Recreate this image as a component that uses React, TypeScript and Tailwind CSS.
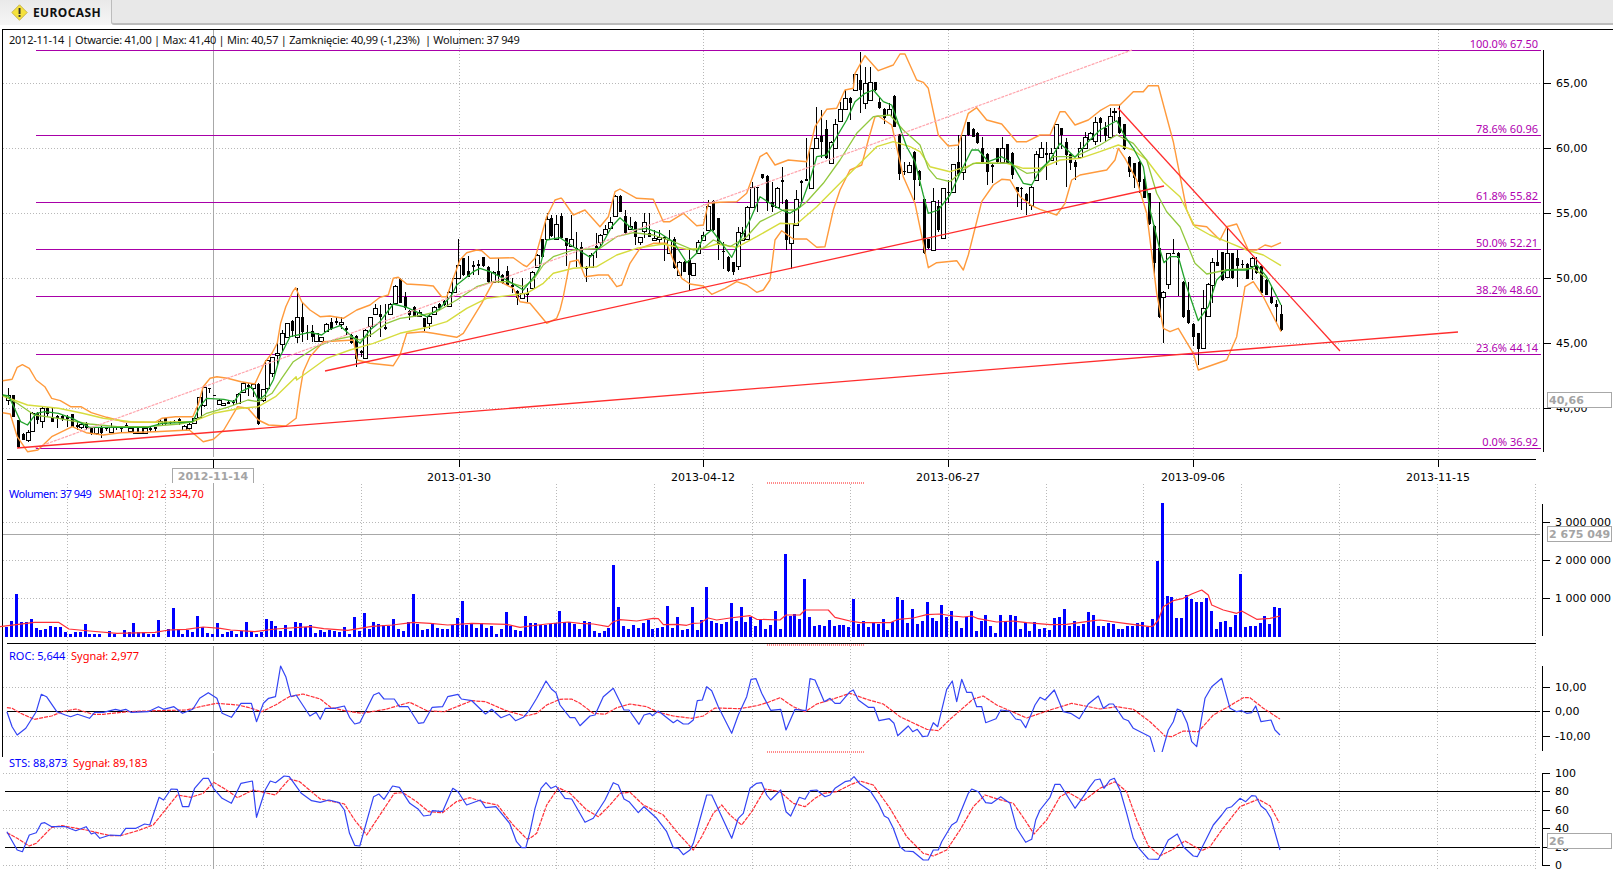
import type { ReactNode } from "react";

// Point data was sampled off 3x crops, hence the origin + divide in seg().
// The widest crops came back at 2.904x horizontally.
const WIDE = 2.904;

function seg(ox: number, oy: number, flat: number[], sx = 3) {
  const out: string[] = [];
  for (let i = 0; i < flat.length; i += 2) {
    out.push(`${(ox + flat[i] / sx).toFixed(1)},${(oy + flat[i + 1] / 3).toFixed(1)}`);
  }
  return out;
}

const upperBand = [
  ...seg(0, 290, [8,272,35,268,50,232,65,224,85,235,105,270,130,290,150,325,175,332,205,350,235,350,265,368,310,382,360,395,400,397,450,397,470,385,510,380,560,380,575,345,590,290,610,265,630,260,660,265,700,275,740,282,770,215,790,190,805,160,815,100,830,50,850,5], WIDE),
  ...seg(260, 180, [107,323,125,365,150,390,180,410,210,408,250,415,290,390,330,375,360,352,385,345,400,295,415,292,440,312,490,315,520,318,545,350,560,350,580,295,600,240,620,218,650,210,665,212,690,235,760,233,790,255,800,260,825,235,860,110,885,60,900,55]),
  ...seg(540, 40, [65,475,100,525,135,510,180,560,205,530,225,455,240,447,290,475,340,478,370,545,390,545,430,520,470,557,490,555,505,490,540,487,590,485,620,460,660,350,680,338,705,375,745,360,800,365,825,260,860,208,890,205,915,150,940,145,945,100,975,47,1015,92,1060,75,1080,42,1095,42,1130,120,1150,127,1165,145,1195,285,1225,318,1255,315,1285,220,1310,203,1340,240,1385,252,1430,305,1460,305,1500,285]),
  ...seg(1000, 80, [150,165,180,95,195,95,225,135,265,120,300,92,330,75,360,75,400,35,430,35,445,17,475,17,520,185,560,390,580,435,620,440,660,480,680,440,710,432,745,510,770,510,795,495,815,500,843,488]),
];

const lowerBand = [
  ...seg(0, 290, [8,368,30,372,50,440,80,485,110,480,150,440,210,410,250,428,300,435,350,428,450,425,550,420,590,455,620,448,650,420,690,350,720,355,750,390,780,405,830,408,860,385,870,310], WIDE),
  ...seg(260, 180, [130,575,150,530,190,485,280,480,292,540,330,550,400,557,420,525,440,460,490,455,520,460,590,472,610,460,665,370,700,305,720,305,760,325,780,365,810,370,860,430,890,415,900,390]),
  ...seg(540, 40, [70,770,90,665,115,660,135,710,175,705,205,705,230,740,245,735,270,670,300,625,340,610,380,610,400,660,425,715,450,732,490,738,515,763,555,745,590,725,620,735,650,757,670,750,690,720,705,600,725,572,760,597,800,597,830,622,855,620,880,510,900,450,930,390,965,375,985,300,1005,230,1015,228,1055,255,1090,410,1125,490,1165,683,1190,668,1250,662,1270,690,1285,645,1325,485,1360,435,1385,418,1410,420,1440,470,1475,497,1500,508]),
  ...seg(1000, 80, [170,405,195,370,215,300,240,285,320,270,345,240,355,205,375,235,410,300,440,400,470,640,490,745,510,755,535,745,580,820,595,870,680,840,710,770,735,620,760,605,790,650,843,755]),
];

const fastMa = [
  ...seg(0, 290, [8,315,25,318,40,350,60,395,80,405,105,370,130,365,170,370,210,385,260,412,340,412,430,412,470,400,520,398,560,395,580,350,600,325,650,328,680,335,700,305,730,290,750,330,770,315], WIDE),
  ...seg(260, 180, [40,600,60,530,90,470,150,457,185,465,205,450,240,437,265,460,300,490,330,450,360,425,400,372,440,382,500,410,540,385,575,345,590,315,640,275,660,265,690,275,740,300,790,330,830,280]),
  ...seg(540, 40, [0,680,20,600,60,593,100,620,150,652,185,615,215,560,240,533,280,570,320,565,360,580,400,605,440,668,470,640,490,590,515,570,545,610,575,652,600,600,630,540,660,470,690,490,725,510,750,520,780,500,810,420,830,350,860,345,890,290,920,240,945,185,975,160,1000,150,1030,185,1055,195,1075,250,1100,320,1125,365,1150,465,1165,520,1195,510,1230,465,1260,400,1295,330,1315,330,1345,365,1385,350,1415,370,1450,430,1475,435,1500,390]),
  ...seg(1000, 80, [150,240,180,190,225,232,260,190,300,150,350,122,375,170,400,205,430,260,450,390,480,510,492,548,510,530,535,530,560,620,595,722,625,680,650,600,680,570,740,570,770,555,800,590,843,675]),
];

const midMa = [
  ...seg(0, 290, [8,315,50,340,100,375,170,385,260,402,340,410,430,410,520,402,560,395,600,370,660,352,720,330,750,335,790,310], WIDE),
  ...seg(260, 180, [65,595,100,545,170,500,220,480,270,470,300,480,340,460,380,430,420,415,490,405,530,395,590,360,650,320,700,305,740,305,790,320,820,300,850,255]),
  ...seg(540, 40, [40,650,100,630,180,625,230,590,280,578,340,585,400,605,460,630,490,625,520,600,570,620,620,590,660,545,730,510,770,510,800,485,850,430,900,360,950,280,1000,230,1050,225,1090,270,1140,315,1165,385,1190,415,1230,425,1270,390,1300,370,1350,370,1410,370,1460,400,1500,395]),
  ...seg(1000, 80, [160,230,225,230,300,195,350,165,400,190,440,240,470,340,500,395,540,440,585,550,620,582,680,570,760,565,800,595]),
];

const slowMa = [
  ...seg(0, 290, [8,318,80,345,170,355,240,370,300,385,380,395,450,397,520,395,560,395,620,370,700,355,750,350,800,320,860,260], WIDE),
  ...seg(260, 180, [110,600,200,535,270,510,340,490,420,460,510,440,560,425,620,385,680,355,760,345,800,340,850,310]),
  ...seg(540, 40, [40,700,100,685,170,680,230,645,290,625,370,612,440,628,490,625,530,612,590,622,650,590,720,550,770,552,830,500,900,430,960,370,1010,320,1060,305,1110,320,1140,335,1170,380,1230,395,1280,380,1310,368,1400,370,1450,385,1500,385]),
  ...seg(1000, 80, [180,240,240,235,300,215,355,195,400,210,440,240,490,305,540,350,585,440,630,465,680,485,740,510,790,525,843,557]),
];

type Row = [number, number, number, number, number];
type Candle = { hi: number; top: number; bot: number; lo: number; filled: boolean };

const toCandles = (oy: number, rows: Row[]): Candle[] =>
  rows.map(([hi, top, bot, lo, f]) => ({
    hi: oy + hi / 3,
    top: oy + top / 3,
    bot: oy + bot / 3,
    lo: oy + lo / 3,
    filled: f === 1,
  }));

// high, body top, body bottom, low, filled
const candles: Candle[] = [
  ...toCandles(290, [
    [295,315,330,345,0],[315,316,380,382,1],[390,390,470,475,1],[430,432,450,452,1],[420,425,450,455,0],[365,368,422,425,0],[365,368,390,400,1],[352,355,392,415,0],[350,355,372,380,1],[355,385,395,395,1],
    [375,378,385,415,1],[375,378,388,392,1],[375,382,386,410,1],[373,373,410,412,1],[395,405,412,418,1],[395,403,412,415,0],[395,403,415,420,1],[410,412,432,434,1],[410,412,430,435,0],[408,410,428,443,1],
    [412,414,418,425,1],[400,412,425,428,0],[410,412,415,418,1],[412,413,415,428,1],[398,405,412,414,1],[412,415,422,424,0],[410,412,428,430,0],[408,411,428,430,0],[413,415,430,432,0],[412,415,419,426,1],
    [410,412,418,422,1],[388,392,405,410,0],[384,385,402,404,1],[393,395,399,406,1],[390,392,396,400,1],[384,388,398,406,1],[405,408,420,422,0],[398,402,415,418,0],[382,385,400,403,0],[320,322,380,385,0],
    [290,292,345,350,0],[295,295,297,310,1],[315,315,318,318,1],[328,330,343,345,0],[338,340,346,348,0],[334,336,341,343,1],[330,335,340,345,1],[310,312,338,340,0],[276,278,305,308,0],[280,285,292,320,1],
    [278,283,295,320,0],[280,282,403,405,1],[296,298,330,336,0],
  ]),
  ...toCandles(180, [
    [540,540,625,630,0],[530,530,580,590,0],[490,518,525,560,0],[450,458,492,515,0],[428,430,470,472,0],[420,423,453,470,1],[323,412,472,488,0],[365,412,455,485,1],[435,455,460,480,1],[435,453,470,487,1],
    [458,460,482,484,0],[470,472,482,484,0],[430,432,452,455,0],[413,427,448,450,1],[410,423,430,435,1],[410,427,433,445,0],[437,445,450,465,1],[462,465,490,492,1],[466,468,538,563,1],[510,512,518,530,1],
    [448,450,535,537,0],[410,412,437,470,0],[372,385,403,405,0],[375,403,412,470,1],[372,442,447,450,1],[370,372,403,405,0],[315,317,368,370,0],[295,297,368,370,1],[335,350,385,390,1],[390,392,405,420,1],
    [378,380,410,412,1],[390,395,408,410,0],[413,415,440,452,1],[400,408,430,447,0],[378,380,403,405,0],[370,372,385,390,1],[360,362,375,378,1],[333,335,378,380,0],[293,295,335,338,0],[178,255,295,297,0],
    [233,235,285,287,1],[228,272,290,292,1],[243,256,260,285,1],[240,253,258,285,1],[230,232,258,260,1],[258,262,305,308,1],[273,275,305,308,0],[235,272,288,310,1],[283,285,310,312,1],[258,272,315,317,1],
    [295,315,322,340,1],[330,333,355,375,1],[295,340,355,358,0],[325,340,345,368,1],[273,275,325,328,0],[223,225,260,262,0],[176,178,232,234,1],
  ]),
  ...toCandles(40, [
    [520,538,597,600,0],[525,535,588,590,1],[525,553,598,600,0],[520,528,595,597,1],[593,595,618,678,1],[525,598,618,620,0],[575,623,628,680,1],[605,620,680,682,1],[678,680,688,725,1],[640,645,680,682,0],
    [580,618,628,655,1],[583,585,605,620,0],[555,568,582,584,0],[530,545,565,567,0],[466,468,527,529,0],[466,468,515,517,1],[510,528,580,582,1],[530,558,568,570,0],[543,545,590,615,1],[590,592,605,615,0],
    [520,547,572,595,0],[520,580,590,592,1],[570,595,600,602,0],[570,590,597,610,0],[588,590,598,662,1],[570,600,640,642,0],[590,598,685,687,1],[663,665,705,707,0],[663,665,695,697,1],[625,660,705,750,1],
    [668,670,706,708,0],[600,605,640,642,0],[575,585,600,602,0],[480,497,570,572,0],[480,482,570,572,1],[533,535,615,660,1],[605,633,637,685,1],[648,650,693,695,1],[665,667,695,705,1],[560,577,678,690,0],
    [560,578,600,602,0],[498,500,598,600,0],[425,440,500,502,0],[440,441,444,515,1],[401,403,415,417,1],[406,408,490,515,1],[425,485,500,515,1],[441,443,500,502,0],[380,420,425,490,1],[478,480,600,630,1],
    [548,550,608,685,0],[450,478,555,557,0],[421,423,430,490,1],[295,418,422,422,1],[323,325,443,445,0],[200,295,325,327,0],[210,288,305,355,1],[240,268,355,357,1],[303,305,368,370,0],[238,253,325,327,0],
    [185,208,242,244,0],[150,175,208,210,0],[170,175,188,240,1],[101,103,150,152,0],[35,120,150,218,1],[80,130,188,205,0],[80,125,180,182,0],[125,127,150,152,1],[170,187,203,205,1],[205,208,235,252,1],
    [190,208,225,227,0],[166,168,260,262,1],[281,283,403,420,1],[365,393,397,405,1],[365,375,395,397,0],[333,335,420,480,1],[391,393,420,440,1],[476,478,638,640,1],[596,598,625,627,1],[445,482,630,632,0],
    [480,498,570,575,1],[443,445,595,597,0],[420,456,460,490,1],[371,373,455,457,0],[285,365,405,407,1],[285,285,395,420,0],[245,247,285,287,1],[265,267,290,292,1],[276,278,310,312,1],[290,325,365,367,1],
    [340,342,395,435,1],[370,376,380,430,1],[323,325,365,367,1],[290,325,365,367,0],[311,313,370,372,1],[336,338,405,418,1],[440,442,455,500,1],[440,443,447,510,1],[460,462,482,525,1],[438,440,495,510,0],
    [333,343,420,422,0],
  ]),
  ...toCandles(80, [
    [185,205,230,232,0],[185,220,224,300,1],[205,220,240,242,0],[133,133,205,255,0],[143,145,165,205,1],[175,187,225,322,1],[220,222,248,270,1],[240,245,262,300,1],[185,205,230,232,0],[155,172,205,207,0],
    [155,158,178,180,0],[110,127,182,195,0],[110,115,130,185,1],[125,145,168,185,1],[85,107,170,172,0],[85,92,97,125,0],[75,112,160,162,1],[131,133,207,209,1],[228,230,275,290,1],[248,250,295,322,1],
    [243,245,305,340,1],[285,297,353,355,1],[338,340,433,435,1],[435,437,550,590,1],[365,505,712,714,1],[633,635,652,788,0],[518,520,612,625,0],[478,518,522,522,1],[516,518,535,648,1],[603,605,712,714,1],
    [605,690,728,730,1],[730,732,770,800,1],[758,760,808,855,1],[630,683,805,807,0],[610,612,708,710,0],[535,547,615,670,0],[510,547,557,559,1],[515,517,600,602,1],[445,520,590,592,0],[518,520,595,597,1],
    [510,535,557,620,1],[540,551,555,565,1],[550,552,597,599,1],[530,535,557,600,0],[530,555,580,582,1],[556,558,640,645,1],[598,600,645,647,1],[620,650,668,670,1],[660,672,680,725,1],[675,703,750,752,1],
  ]),
];

const volumes = [
  10,16,43,15,15,18,9,7,8,11,10,10,5,3,5,5,13,3,3,3,0,6,3,0,7,5,14,5,5,3,3,17,0,8,29,8,3,7,5,21,10,4,3,14,
  3,5,6,3,6,15,6,3,5,18,16,11,6,12,6,15,14,10,12,4,7,5,7,6,5,10,3,20,6,24,8,15,13,12,11,18,8,6,15,43,13,7,8,14,9,8,8,12,19,36,12,13,9,14,9,11,3,8,25,11,7,6,21,
  14,14,12,12,13,14,26,15,15,13,8,16,15,6,4,6,9,72,30,11,8,12,9,14,17,8,9,10,31,9,20,7,8,30,7,17,50,16,14,13,15,34,16,30,15,20,11,18,8,12,26,8,83,21,23,18,58,20,11,12,11,17,11,12,12,10,
  38,13,16,10,15,13,18,7,15,40,37,14,28,13,16,35,19,16,32,20,26,16,9,20,26,6,16,22,11,4,22,16,22,21,8,14,6,15,8,9,7,19,20,28,11,16,11,13,25,22,11,
  11,14,13,8,8,11,11,14,15,10,18,76,134,41,40,19,19,42,38,35,35,39,26,8,15,16,10,22,63,10,11,11,14,21,13,30,29,
];

const volumeSma = [
  ...seg(0, 580, [0,140,100,127,170,127,200,147,260,153,340,160,450,157,490,150,540,148,590,141,640,145,670,150,740,155,800,147,900,140,940,146,1010,151,1080,139,1140,135,1200,127,1250,130,1300,135,1370,130,1470,133,1510,142], WIDE),
  ...seg(530, 480, [0,438,50,432,115,426,150,430,190,432,235,440,250,425,270,419,320,423,370,415,385,416,400,434,440,433,470,436,490,430,510,429,535,414,560,420,600,414,660,407,680,418,750,420,768,405,810,405,825,390,895,390,915,412,960,423]),
  ...seg(850, 480, [30,428,120,428,145,418,190,414,230,404,270,402,310,408,340,411,365,408,385,416,440,426,490,423,530,428,600,434,650,433,730,422,750,420,830,431,900,440]),
  ...seg(1100, 480, [160,438,175,420,190,380,220,362,250,355,275,342,305,330,325,345,335,375,370,390,410,400,425,393,470,418,510,415,540,408]),
];

const rocLine = [
  ...seg(0, 580, [20,395,35,440,50,465,75,445,105,395,120,343,135,350,165,395,190,405,205,410,225,403,260,415,275,397,300,397,335,388,350,392,365,388,380,397,430,395,460,380,475,388,505,380,530,400,560,388,580,355,605,338,630,355,645,400,672,412,700,370,730,370,745,425,765,370,780,355,800,350,815,258,830,290,845,350,860,345,900,408,918,397,930,418,945,385,970,385,1000,378,1015,412,1030,432,1045,428,1085,345,1100,338,1115,357,1145,357,1160,380,1185,380,1215,430,1230,428,1255,382,1285,380,1300,350,1330,343,1340,357,1370,362,1410,402,1428,388,1455,413,1480,403,1497,422,1520,412], WIDE),
  ...seg(530, 480, [0,688,20,655,48,603,65,628,78,638,90,675,120,713,135,713,150,737,180,708,195,705,220,650,250,625,282,690,297,690,327,733,342,705,360,700,367,707,385,693,430,728,442,720,460,732,475,732,490,720,502,662,517,660,530,620,545,632,565,680,605,760,625,705,650,650,663,598,678,596,695,640,722,691,752,688,768,750,795,688,828,692,840,596,855,600,883,665,900,655,915,670,930,670,960,635]),
  ...seg(850, 480, [10,630,25,660,55,682,72,682,87,722,118,716,132,730,143,767,175,738,188,755,202,748,218,770,233,768,250,728,263,740,290,628,307,603,320,665,335,598,350,637,365,637,380,680,395,680,407,728,438,716,452,690,478,693,497,717,512,720,527,743,555,675,570,652,585,660,613,630,640,695,662,700,688,716,715,672,745,648,760,685,778,672,790,672,820,716,835,722,850,745,900,770]),
  ...seg(1100, 580, [165,520,185,520,205,450,220,425,232,387,245,393,262,430,275,485,290,500,315,355,335,320,365,295,390,385,410,395,425,392,440,400,455,398,467,378,483,425,513,420,525,450,540,465]),
];

const rocSignal = [
  ...seg(0, 580, [20,383,35,385,60,400,100,418,150,408,180,395,220,387,270,403,300,403,370,395,450,392,540,390,590,378,630,370,690,375,720,382,760,395,800,375,840,350,880,342,930,357,960,382,1000,392,1050,400,1120,388,1190,367,1240,392,1290,395,1370,362,1410,365,1470,392,1525,408], WIDE),
  ...seg(530, 480, [0,705,20,700,50,675,90,658,125,657,150,670,190,700,225,703,260,683,300,672,350,680,385,697,430,708,485,715,520,708,555,684,630,686,680,677,715,667,750,653,790,680,825,695,860,672,900,660,960,640]),
  ...seg(850, 480, [50,658,100,672,150,710,230,748,265,752,300,718,370,657,400,648,440,675,530,714,600,690,665,670,750,687,800,680,850,688,900,725]),
  ...seg(1100, 580, [195,468,215,470,250,453,295,455,340,405,385,380,430,353,450,353,490,385,540,417]),
];

const stsLine = [
  ...seg(0, 580, [20,755,50,810,65,815,85,765,105,758,120,730,130,728,150,740,190,740,220,752,250,740,265,762,275,758,290,775,320,765,350,767,365,745,395,745,420,732,435,735,462,652,475,660,497,627,515,628,530,680,548,680,565,625,590,595,605,595,620,625,645,655,672,670,700,610,733,603,745,712,770,630,785,603,800,608,825,588,840,590,875,640,905,662,930,667,955,660,985,668,1000,690,1015,760,1030,796,1045,798,1085,650,1100,642,1115,658,1140,618,1160,622,1190,670,1215,688,1230,708,1250,705,1255,692,1285,695,1315,625,1330,635,1355,675,1395,660,1410,683,1440,680,1480,730,1500,785,1515,803,1527,803], WIDE),
  ...seg(530, 480, [0,1055,15,985,33,925,48,908,63,925,78,918,105,955,125,957,165,1027,190,1015,225,960,250,908,265,915,282,957,297,965,325,998,342,980,380,1015,410,1055,430,1103,445,1105,460,1124,480,1110,490,1090,530,945,545,945,605,1075,625,1015,640,1000,660,925,680,910,695,908,710,945,722,960,752,930,768,995,782,1008,808,952,825,958,840,932,860,930,885,950,900,945,915,925,945,905,960,902]),
  ...seg(850, 480, [12,890,30,912,60,932,85,970,103,1008,115,1015,130,1045,150,1100,165,1113,190,1115,220,1140,235,1140,250,1110,265,1110,275,1085,305,1035,320,1025,355,940,365,927,385,935,407,968,425,970,452,950,480,970,500,1045,527,1087,545,1078,557,1020,570,990,600,952,615,913,630,913,675,985,700,950,720,920,735,900,750,897,762,925,780,900,793,895,810,930,830,1000,850,1075,865,1103,895,1137]),
  ...seg(1100, 580, [175,838,190,810,205,780,232,762,250,800,280,828,292,830,320,775,340,735,365,705,380,685,395,680,420,655,437,665,455,647,467,648,483,678,498,690,513,715,540,810]),
];

const stsSignal = [
  ...seg(0, 580, [20,758,50,775,85,798,105,790,150,742,180,737,250,750,320,767,350,767,400,752,445,735,515,645,555,652,590,640,620,607,650,625,690,653,735,630,800,645,840,597,870,605,930,657,1000,672,1030,720,1065,765,1100,710,1145,640,1170,638,1210,665,1245,695,1285,698,1325,665,1365,653,1410,668,1445,675,1490,735,1530,777], WIDE),
  ...seg(530, 480, [0,1075,20,1060,50,975,85,923,120,940,170,990,205,1010,240,975,270,940,300,937,340,975,400,1005,440,1055,490,1110,515,1070,550,1000,575,975,600,1005,635,1035,665,995,705,927,750,935,790,970,825,980,855,955,880,940,920,935,960,915]),
  ...seg(850, 480, [30,903,70,915,120,985,170,1070,220,1120,250,1128,290,1110,330,1050,370,980,405,945,445,958,490,970,525,1020,552,1062,590,1020,630,950,655,937,700,963,750,925,795,905,830,935,860,1020,895,1097]),
  ...seg(1100, 580, [180,827,215,810,255,783,305,812,330,800,365,750,420,680,475,658,510,677,538,728]),
];

const fibs = [
  { y: 50, label: "100.0% 67.50" },
  { y: 135, label: "78.6% 60.96" },
  { y: 202, label: "61.8% 55.82" },
  { y: 249, label: "50.0% 52.21" },
  { y: 296, label: "38.2% 48.60" },
  { y: 354, label: "23.6% 44.14" },
  { y: 448, label: "0.0% 36.92" },
];

const priceTicks = [
  { y: 83, label: "65,00" },
  { y: 148, label: "60,00" },
  { y: 213, label: "55,00" },
  { y: 278, label: "50,00" },
  { y: 343, label: "45,00" },
  { y: 408, label: "40,00" },
];

const dates = [
  { x: 459, label: "2013-01-30" },
  { x: 703, label: "2013-04-12" },
  { x: 948, label: "2013-06-27" },
  { x: 1193, label: "2013-09-06" },
  { x: 1438, label: "2013-11-15" },
];

// lower panes get a denser time grid
const paneGridX = [67, 165, 263, 361, 459, 556, 654, 752, 850, 948, 1046, 1143, 1241, 1339, 1437, 1535];

const CURSOR_X = 213;
const MONO = "font-['DejaVu_Sans',sans-serif] text-[11px]";
const UI = "font-['Noto_Sans',sans-serif] text-[11px]";

function Line({ points, color, width = 1.3, dash }: { points: string[]; color: string; width?: number; dash?: string }) {
  return (
    <polyline
      points={points.join(" ")}
      fill="none"
      stroke={color}
      strokeWidth={width}
      strokeDasharray={dash}
      strokeLinejoin="round"
    />
  );
}

function Block({ x, y, w, h, className = "fill-black" }: { x: number; y: number; w: number; h: number; className?: string }) {
  return <rect x={x} y={y} width={w} height={h} className={className} shapeRendering="crispEdges" />;
}

function DotsH({ y, x1 = 3, x2 = 1535 }: { y: number; x1?: number; x2?: number }) {
  return <line x1={x1} x2={x2} y1={y + 0.5} y2={y + 0.5} stroke="#b8b8b8" strokeDasharray="1 2" shapeRendering="crispEdges" />;
}

function DotsV({ x, y1, y2 }: { x: number; y1: number; y2: number }) {
  return <line x1={x + 0.5} x2={x + 0.5} y1={y1} y2={y2} stroke="#b8b8b8" strokeDasharray="1 2" shapeRendering="crispEdges" />;
}

// short pale red marker that sits on the seam between two panes
function SeamMark({ y }: { y: number }) {
  return <line x1={767} x2={865} y1={y} y2={y} stroke="#ff8a8a" strokeDasharray="1 1" shapeRendering="crispEdges" />;
}

function CandleMark({ c, x }: { c: Candle; x: number }) {
  const cx = Math.round(x);
  const top = Math.round(c.top);
  const h = Math.max(1, Math.round(c.bot) - top);
  return (
    <g shapeRendering="crispEdges">
      <rect x={cx} y={Math.round(c.hi)} width={1} height={Math.max(1, Math.round(c.lo - c.hi))} className="fill-black" />
      {c.filled ? (
        <rect x={cx - 1} y={top} width={3} height={h} className="fill-black" />
      ) : (
        <rect x={cx - 1.5} y={top + 0.5} width={4} height={h} className="fill-white stroke-black" />
      )}
    </g>
  );
}

// one horizontal slice of the chart, svg units are page pixels
function Pane({ top, height, children, overlay }: { top: number; height: number; children: ReactNode; overlay?: ReactNode }) {
  return (
    <div className="relative w-full shrink-0" style={{ height }}>
      <svg className={`absolute inset-0 block ${MONO}`} width={1613} height={height} viewBox={`0 ${top} 1613 ${height}`}>
        {children}
      </svg>
      {overlay}
    </div>
  );
}

function ValueBox({ className, children }: { className: string; children: ReactNode }) {
  return (
    <div className={`absolute box-border flex items-center border border-[#a8a8a8] bg-white pl-px font-['DejaVu_Sans',sans-serif] text-[11px] font-bold leading-none text-[#a4a4a4] ${className}`}>
      {children}
    </div>
  );
}

function Ticks({ x, items }: { x: number; items: { y: number; label: string }[] }) {
  return (
    <>
      {items.map((t) => (
        <g key={t.label}>
          <Block x={x} y={t.y} w={8} h={1} />
          <text x={x + 13} y={t.y + 4} className="fill-black">
            {t.label}
          </text>
        </g>
      ))}
    </>
  );
}

function TabStrip() {
  return (
    <div className="flex h-[25px] shrink-0">
      <div className="flex w-[111px] items-center gap-[5px] bg-gradient-to-b from-[#e9e9e9] to-[#f6f6f6] pl-[11px]">
        <svg width="17" height="17" viewBox="0 0 17 17">
          <path d="M8.5 .8 16.2 8.5 8.5 16.2 .8 8.5Z" fill="#f5e23c" stroke="#c9b44a" strokeLinejoin="round" />
          <rect x="7.6" y="4" width="1.9" height="6" fill="#333" />
          <rect x="7.6" y="11" width="1.9" height="1.9" fill="#333" />
        </svg>
        <span className="font-['Noto_Sans',sans-serif] text-[12px] font-bold leading-none tracking-[0.4px] text-[#111]">EUROCASH</span>
      </div>
      <div className="flex-1 rounded-bl-[3px] border-b-2 border-l border-[#bcbcbc] bg-[#e8e8e8]" />
    </div>
  );
}

export default function App() {
  return (
    <div className="flex h-[871px] w-[1613px] flex-col overflow-hidden bg-white">
      <TabStrip />
      <div className="h-[4px] shrink-0" />

      {/* price pane */}
      <Pane
        top={29}
        height={454}
        overlay={
          <>
            <div className={`absolute left-[9px] top-[2px] whitespace-pre ${UI} leading-[18px] tracking-[-0.24px] text-[#111]`}>
              2012-11-14 | Otwarcie: 41,00 | Max: 41,40 | Min: 40,57 | Zamknięcie: 40,99 (-1,23%)  | Wolumen: 37 949
            </div>
            <ValueBox className="left-[1547px] top-[363px] h-[16px] w-[65px]">40,66</ValueBox>
            <div className="absolute left-[172px] top-[439px] box-border flex h-[15px] w-[82px] items-start justify-center border border-b-0 border-[#a8a8a8] bg-white pt-[2px] font-['DejaVu_Sans',sans-serif] text-[11px] font-bold leading-none text-[#a4a4a4]">
              2012-11-14
            </div>
          </>
        }
      >
        <Block x={2} y={29} w={1611} h={1} />
        <Block x={2} y={29} w={1} h={454} />
        {priceTicks.map((t) => (
          <DotsH key={t.y} y={t.y} x2={1541} />
        ))}
        {dates.map((d) => (
          <DotsV key={d.x} x={d.x} y1={30} y2={458} />
        ))}
        <Block x={CURSOR_X} y={30} w={1} h={427} className="fill-[#a8a8a8]" />
        {fibs.map((f) => (
          <g key={f.y}>
            <Block x={36} y={f.y} w={1505} h={1} className="fill-[#a800a8]" />
            <text x={1538} y={f.y - 2} textAnchor="end" className={`fill-[#b000b0] ${UI}`}>
              {f.label}
            </text>
          </g>
        ))}
        {candles.map((c, i) => (
          <CandleMark key={i} c={c} x={8 + 4.896 * i} />
        ))}
        <Line points={upperBand} color="#ff9a3c" width={1.4} />
        <Line points={lowerBand} color="#ff9a3c" width={1.4} />
        <Line points={slowMa} color="#d6dc3e" width={1.4} />
        <Line points={midMa} color="#92c83e" width={1.3} />
        <Line points={fastMa} color="#22a32c" width={1.3} />
        <line x1={35} y1={448} x2={1132} y2={50} stroke="#ffa4ac" strokeWidth={1.2} strokeDasharray="3 1" />
        <line x1={17} y1={448} x2={1458} y2={332} stroke="#ff2d2d" strokeWidth={1.3} />
        <line x1={325} y1={371} x2={1164} y2={186} stroke="#ff2d2d" strokeWidth={1.3} />
        <line x1={1118} y1={108} x2={1340} y2={351} stroke="#ff2d2d" strokeWidth={1.3} />

        <Block x={1543} y={50} w={1} h={402} />
        <Ticks x={1543} items={priceTicks} />

        <Block x={7} y={459} w={1529} h={1} />
        <Block x={CURSOR_X} y={459} w={1} h={9} />
        {dates.map((d) => (
          <g key={d.x}>
            <Block x={d.x} y={459} w={1} h={8} />
            <text x={d.x} y={481} textAnchor="middle" className="fill-black">
              {d.label}
            </text>
          </g>
        ))}
        <SeamMark y={482.5} />
      </Pane>

      {/* volume pane */}
      <Pane
        top={483}
        height={161}
        overlay={
          <>
            <div className={`absolute left-[9px] top-[2px] ${UI} leading-[18px] tracking-[-0.5px] text-[#0000ff]`}>Wolumen: 37 949</div>
            <div className={`absolute left-[99px] top-[2px] ${UI} leading-[18px] text-[#ff0000]`}>SMA[10]: 212 334,70</div>
            <ValueBox className="left-[1547px] top-[43px] h-[16px] w-[65px]">2 675 049</ValueBox>
          </>
        }
      >
        <Block x={2} y={483} w={1} h={161} />
        {[522, 560, 598].map((y) => (
          <DotsH key={y} y={y} />
        ))}
        {paneGridX.map((x) => (
          <DotsV key={x} x={x} y1={484} y2={641} />
        ))}
        <Block x={CURSOR_X} y={483} w={1} h={158} className="fill-[#a8a8a8]" />
        <Block x={3} y={534} w={1537} h={1} className="fill-[#a8a8a8]" />
        <SeamMark y={483.5} />
        {volumes.map((h, i) =>
          h > 0 ? <Block key={i} x={Math.round(6.2 + 4.896 * i) - 1} y={637 - h} w={3} h={h} className="fill-[#0000ff]" /> : null,
        )}
        <Line points={volumeSma} color="#ff3038" width={1.2} />
        <Block x={7} y={643} w={1529} h={1} />
        <Block x={1542} y={504} w={1} h={132} />
        <Ticks
          x={1542}
          items={[
            { y: 522, label: "3 000 000" },
            { y: 560, label: "2 000 000" },
            { y: 598, label: "1 000 000" },
          ]}
        />
      </Pane>

      {/* ROC pane */}
      <Pane
        top={644}
        height={108}
        overlay={
          <>
            <div className={`absolute left-[9px] top-[3px] ${UI} leading-[18px] text-[#0000ff]`}>ROC: 5,644</div>
            <div className={`absolute left-[71px] top-[3px] ${UI} leading-[18px] text-[#ff0000]`}>Sygnał: 2,977</div>
          </>
        }
      >
        <Block x={2} y={644} w={1} h={108} />
        {[687, 736].map((y) => (
          <DotsH key={y} y={y} />
        ))}
        {paneGridX.map((x) => (
          <DotsV key={x} x={x} y1={646} y2={751} />
        ))}
        <Block x={CURSOR_X} y={646} w={1} h={105} className="fill-[#a8a8a8]" />
        <SeamMark y={644.5} />
        <SeamMark y={645.5} />
        <SeamMark y={751.5} />
        <Block x={7} y={711} w={1533} h={1} />
        <Line points={rocSignal} color="#ff3038" width={1.2} dash="4 1" />
        <Line points={rocLine} color="#3344f4" width={1.2} />
        <Block x={1542} y={666} w={1} h={85} />
        <Ticks
          x={1542}
          items={[
            { y: 687, label: "10,00" },
            { y: 711, label: "0,00" },
            { y: 736, label: "-10,00" },
          ]}
        />
      </Pane>

      {/* stochastic pane */}
      <Pane
        top={752}
        height={119}
        overlay={
          <>
            <div className={`absolute left-[9px] top-[2px] ${UI} leading-[18px] text-[#0000ff]`}>STS: 88,873</div>
            <div className={`absolute left-[73px] top-[2px] ${UI} leading-[18px] text-[#ff0000]`}>Sygnał: 89,183</div>
            <ValueBox className="left-[1547px] top-[81px] h-[16px] w-[65px]">26</ValueBox>
          </>
        }
      >
        <Block x={2} y={752} w={1} h={5} />
        {[773, 810, 828, 865].map((y) => (
          <DotsH key={y} y={y} />
        ))}
        {paneGridX.map((x) => (
          <DotsV key={x} x={x} y1={754} y2={869} />
        ))}
        <Block x={CURSOR_X} y={753} w={1} h={116} className="fill-[#a8a8a8]" />
        <SeamMark y={752.5} />
        <Block x={5} y={791} w={1535} h={1} />
        <Block x={5} y={847} w={1535} h={1} />
        <Line points={stsSignal} color="#ff3038" width={1.2} dash="4 1" />
        <Line points={stsLine} color="#3344f4" width={1.2} />
        <Block x={1542} y={773} w={1} h={93} />
        <Ticks
          x={1542}
          items={[
            { y: 773, label: "100" },
            { y: 791, label: "80" },
            { y: 810, label: "60" },
            { y: 828, label: "40" },
            { y: 847, label: "20" },
            { y: 865, label: "0" },
          ]}
        />
      </Pane>
    </div>
  );
}
